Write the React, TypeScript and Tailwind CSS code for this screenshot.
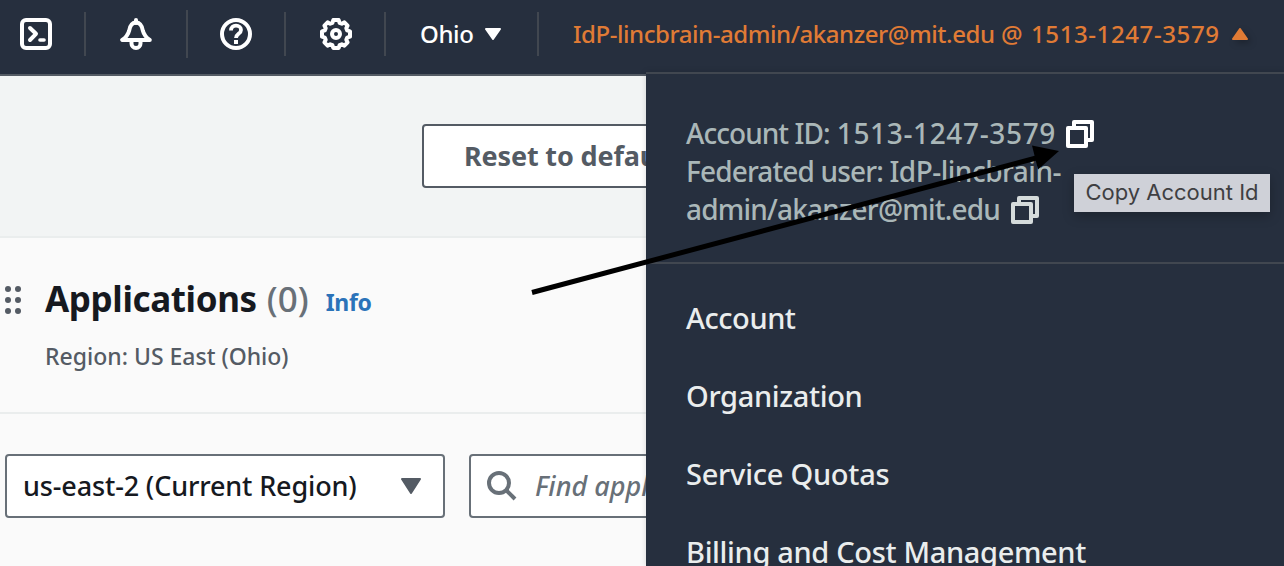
import React from "react";

function Divider({ tall = false }: { tall?: boolean }) {
  return <span className={tall ? "h-12 w-0.5 shrink-0 bg-[#414750]" : "h-11 w-0.5 shrink-0 bg-[#414750]"} />;
}

function TerminalIcon() {
  return (
    <svg className="size-8 shrink-0" viewBox="0 0 32 32" fill="none" stroke="#fff" strokeWidth="4">
      <rect x="2" y="2" width="28" height="28" rx="4" />
      <path d="M10 10l6 5.800-6 6.200" strokeLinecap="round" strokeLinejoin="round" />
      <path d="M20 22h4" strokeLinecap="round" strokeWidth="3.600" />
    </svg>
  );
}

function BellIcon() {
  return (
    <svg className="size-8 shrink-0" viewBox="0 0 32 32" fill="none" stroke="#fff" strokeWidth="4" strokeLinejoin="round">
      <path d="M16 2v3" strokeLinecap="round" />
      <path d="M2.200 22h27.600c-3.800-2.500-5.800-5-7-9.500C21.800 7 20 4.500 16 4.500s-5.800 2.500-6.800 8C8 17 6 19.500 2.200 22z" />
      <path d="M11.500 23v2.500a4.500 4.500 0 0 0 9 0V23" />
    </svg>
  );
}

function HelpIcon() {
  return (
    <svg className="size-8 shrink-0" viewBox="0 0 32 32" fill="none" stroke="#fff" strokeWidth="4">
      <circle cx="16" cy="16" r="14" />
      <path d="M11 12.500c0-3 2-4.800 5-4.800s5 1.700 5 4.200c0 4-5 3.900-5 8.100" strokeWidth="3.800" />
      <path d="M14 22h4v4h-4z" fill="#fff" stroke="none" />
    </svg>
  );
}

function GearIcon() {
  return (
    <svg className="size-8 shrink-0" viewBox="0 0 32 32" fill="none" stroke="#fff" strokeWidth="4" strokeLinejoin="round">
      <path d="M13.300 2h5.400l.9 2.800 2.200.9 2.600-1.300 3.200 3.200-1.300 2.600.9 2.200 2.800.9v5.400l-2.800.9-.9 2.200 1.300 2.600-3.200 3.200-2.600-1.300-2.200.9-.9 2.800h-5.400l-.9-2.800-2.200-.9-2.600 1.300-3.200-3.200 1.300-2.600-.9-2.200-2.800-.9v-5.400l2.800-.9.9-2.200-1.300-2.600 3.200-3.200 2.600 1.300 2.200-.9z" />
      <circle cx="16" cy="16" r="4" />
    </svg>
  );
}

function CopyIcon({ className }: { className: string }) {
  return (
    <svg className={className} viewBox="0 0 28 28" fill="none" stroke="currentColor" strokeWidth="4" strokeLinejoin="round">
      <rect x="2" y="8" width="18" height="18" />
      <path d="M8 8V2h18v18h-6" />
    </svg>
  );
}

const menuItems = [
  { label: "Account", tracking: "tracking-[-0.45px]" },
  { label: "Organization", tracking: "tracking-[-0.35px]" },
  { label: "Service Quotas", tracking: "tracking-[-0.25px]" },
  { label: "Billing and Cost Management", tracking: "tracking-[-0.34px]" },
];

function AccountMenu() {
  return (
    <aside className="absolute top-[72px] right-0 h-[494px] w-[638px] overflow-hidden border-t-2 border-[#414750] bg-[#262f3e] shadow-[0_0_6px_rgba(0,0,0,0.15)]">
      <div className="h-[190px] border-b-2 border-[#414750] pt-10 pl-10 text-[28px] leading-[38px] font-medium text-[#aab7b8]">
        <div className="flex">
          <span className="flex w-[370px]">
            <span className="w-[151px] tracking-[-0.95px]">Account ID:</span>
            <span className="tracking-[0.65px]">1513-1247-3579</span>
          </span>
          <CopyIcon className="mt-[6px] ml-2.5 size-7 text-white" />
        </div>
        <div>
          <span className="tracking-[-0.85px]">Federated user: </span>
          <span className="tracking-[-0.5px]">IdP-lincbrain-</span>
        </div>
        <div className="flex">
          <span className="w-[315px] tracking-[-0.8px]">admin/akanzer@mit.edu</span>
          <CopyIcon className="mt-[6px] ml-2.5 size-7 text-[#d5dbdb]" />
        </div>
      </div>
      <ul className="pt-[15px] pl-10 text-[29px] font-medium text-[#eaeded]">
        {menuItems.map((item) => (
          <li key={item.label} className="flex h-[78px] items-center whitespace-nowrap">
            <span className={item.tracking}>{item.label}</span>
          </li>
        ))}
      </ul>
    </aside>
  );
}

function DragHandle() {
  return (
    <svg className="mt-[2px] h-7 w-4 shrink-0" viewBox="0 0 16 28" fill="#545b64">
      <circle cx="3" cy="3" r="3" />
      <circle cx="13" cy="3" r="3" />
      <circle cx="3" cy="14" r="3" />
      <circle cx="13" cy="14" r="3" />
      <circle cx="3" cy="25" r="3" />
      <circle cx="13" cy="25" r="3" />
    </svg>
  );
}

export default function App() {
  return (
    <div className="relative flex h-[566px] w-[1284px] flex-col overflow-hidden bg-[#fafafa] font-['Noto_Sans',sans-serif] whitespace-nowrap">
      <header className="flex h-[76px] shrink-0 items-start border-b-2 border-[#545b64] bg-[#262f3e]">
        <div className="flex h-[68px] items-center pl-5">
          <TerminalIcon />
          <span className="ml-8 flex"><Divider /></span>
          <span className="ml-[34px] flex"><BellIcon /></span>
          <span className="ml-[34px] flex"><Divider tall /></span>
          <span className="ml-8 flex"><HelpIcon /></span>
          <span className="ml-8 flex"><Divider /></span>
          <span className="ml-[34px] flex"><GearIcon /></span>
          <span className="ml-8 flex"><Divider /></span>
          <button className="ml-[34px] flex w-[81px] items-center justify-between text-2xl font-medium text-white">
            <span className="tracking-[-0.4px]">Ohio</span>
            <svg className="h-3 w-4" viewBox="0 0 16 12" fill="#fff" stroke="#fff" strokeWidth="2" strokeLinejoin="round">
              <path d="M1 1h14L8 11z" />
            </svg>
          </button>
          <span className="ml-9 flex"><Divider /></span>
          <button className="ml-[34px] flex w-[675px] items-center text-2xl font-medium text-[#e07b35]">
            <span className="w-[428px] text-left tracking-[-0.43px]">IdP-lincbrain-admin/akanzer@mit.edu</span>
            <span className="w-[30px] text-left">@</span>
            <span className="tracking-[0.6px]">1513-1247-3579</span>
            <svg className="ml-auto h-3 w-4 drop-shadow-[3px_3px_3px_rgba(0,0,0,0.25)]" viewBox="0 0 16 12" fill="#e07b35" stroke="#e07b35" strokeWidth="2" strokeLinejoin="round">
              <path d="M1 11h14L8 1z" />
            </svg>
          </button>
        </div>
      </header>
      <section className="flex h-[162px] shrink-0 items-start border-b-2 border-[#eaeded] bg-[#f2f4f4] pt-12 pl-[422px]">
        <button className="flex h-16 w-[330px] items-center rounded-[4px] border-2 border-[#545b64] bg-white pl-10 text-[27px] font-bold tracking-[-0.15px] text-[#545b64]">
          Reset to defaults
        </button>
      </section>
      <section className="h-[176px] shrink-0 border-b-2 border-[#eaeded] pt-[37px] pl-[5px]">
        <div className="flex h-12 items-center">
          <DragHandle />
          <h1 className="ml-6 text-[35px] leading-[48px] font-bold tracking-[-0.37px] text-[#16191f]">Applications</h1>
          <span className="ml-2.5 text-[35px] leading-[48px] font-medium text-[#687078]">(0)</span>
          <a className="mt-[6px] ml-[17px] text-[23px] font-bold tracking-[-0.3px] text-[#2b73b9]">Info</a>
        </div>
        <p className="mt-[17px] pl-10 text-[23px] leading-8 font-medium text-[#545b64]">Region: US East (Ohio)</p>
      </section>
      <section className="flex gap-6 pt-10 pl-[5px]">
        <button className="flex h-16 w-[440px] items-center justify-between rounded-[4px] border-2 border-[#687078] bg-white pr-[22px] pl-4 text-[27px] font-medium text-[#16191f]">
          <span className="tracking-[-0.14px]">us-east-2 (Current Region)</span>
          <svg className="h-4 w-5" viewBox="0 0 20 16" fill="#545b64" stroke="#545b64" strokeWidth="2" strokeLinejoin="round">
            <path d="M1 1h18L10 15z" />
          </svg>
        </button>
        <div className="flex h-16 w-[440px] items-center rounded-[4px] border-2 border-[#687078] bg-white pl-4 text-[27px] font-medium text-[#687078] italic">
          <svg className="size-[30px]" viewBox="0 0 30 30" fill="none" stroke="#687078" strokeWidth="4">
            <circle cx="12" cy="12" r="10" />
            <path d="M19.500 19.500l8.500 8.500" />
          </svg>
          <span className="ml-[18px]">Find applications</span>
        </div>
      </section>
      <AccountMenu />
      <div className="absolute top-[174px] left-[1074px] flex h-[38px] w-[196px] items-center justify-center bg-[#cfd1d8] pb-0.5 font-['Inter',sans-serif] text-[22px] text-[#3f3f42] shadow-[0_4px_12px_rgba(0,0,0,0.25)]">
        Copy Account Id
      </div>
      <svg className="pointer-events-none absolute top-0 left-0 h-[566px] w-[1284px]" viewBox="0 0 1284 566">
        <path d="M532 292.500L1040 157" stroke="#000" strokeWidth="5" />
        <path d="M1059 151L1032 145.500l6 24z" fill="#000" />
      </svg>
    </div>
  );
}
